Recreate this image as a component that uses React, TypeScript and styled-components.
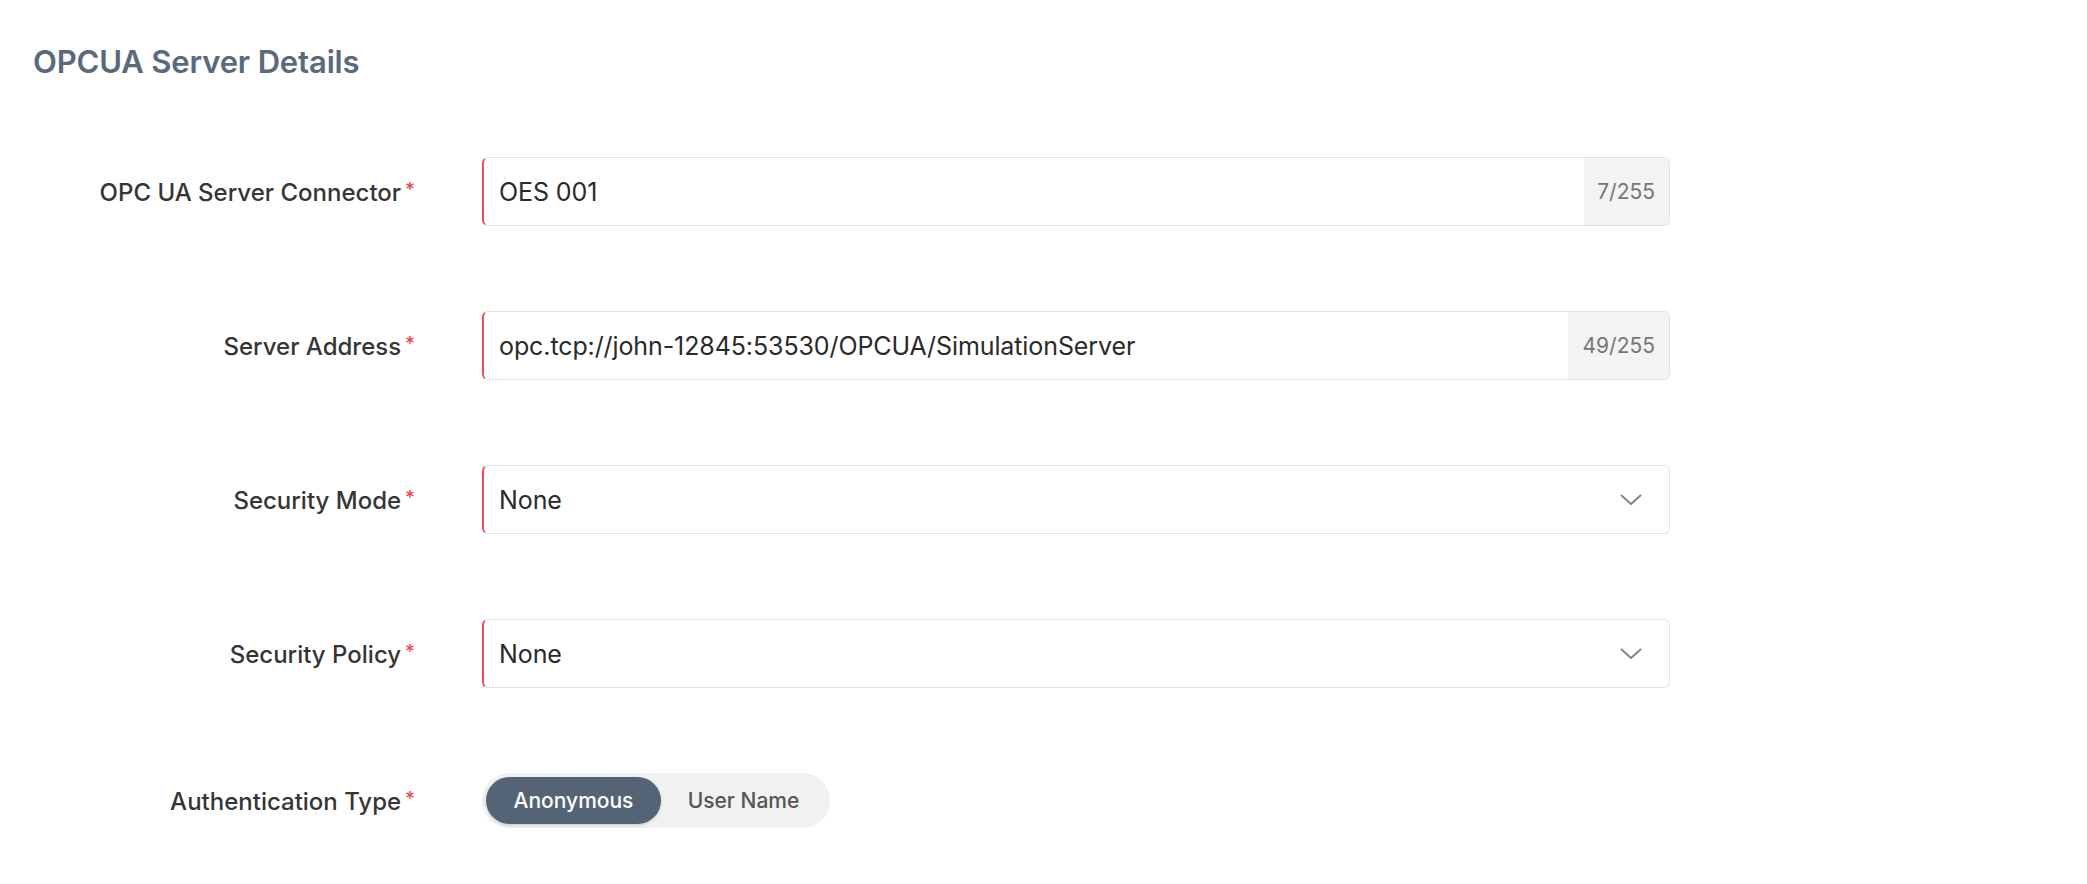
import React, { useState } from "react";
import styled, { createGlobalStyle } from "styled-components";

const GlobalStyle = createGlobalStyle`
  html, body { margin: 0; padding: 0; background: #ffffff; }
  body { font-family: Inter, "Noto Sans", "Liberation Sans", sans-serif; -webkit-font-smoothing: antialiased; }
  * { box-sizing: border-box; }
`;

const Page = styled.div`
  padding: 43px 0 40px 33px;
`;

const Title = styled.h1`
  margin: 0 0 77px 0;
  font-size: 31px;
  line-height: 37px;
  font-weight: 600;
  color: #5a6a7c;
  letter-spacing: -0.15px;
`;

const Form = styled.div`
  display: grid;
  grid-template-columns: 382px 1188px;
  column-gap: 67px;
  row-gap: 85px;
  align-items: center;
`;

const Label = styled.label`
  justify-self: end;
  font-size: 24px;
  font-weight: 500;
  color: #353535;
  white-space: nowrap;
  letter-spacing: 0;
  padding-top: 2px;
`;

const Required = styled.span`
  color: #ec4650;
  margin-left: 4px;
  font-size: 19px;
  vertical-align: 5px;
`;

const Field = styled.div`
  display: flex;
  align-items: stretch;
  height: 69px;
  border: 1px solid #e2e2e2;
  border-left: 2px solid #ef4d57;
  border-radius: 6px;
  background: #ffffff;
  overflow: hidden;
`;

const Value = styled.div`
  flex: 1;
  display: flex;
  align-items: center;
  padding-left: 15px;
  font-size: 25px;
  color: #2a2a2a;
  white-space: nowrap;
  letter-spacing: -0.1px;
`;

const Counter = styled.div<{ $w: number }>`
  width: ${(p) => p.$w}px;
  display: flex;
  align-items: center;
  justify-content: flex-end;
  padding-right: 14px;
  background: #f3f3f3;
  font-size: 21px;
  color: #767676;
`;

const Chevron = styled.div`
  display: flex;
  align-items: center;
  padding-right: 27px;
`;

const Toggle = styled.div`
  justify-self: start;
  display: flex;
  align-items: center;
  height: 55px;
  padding: 4px;
  border-radius: 28px;
  background: #f1f1f1;
`;

const Segment = styled.button<{ $active?: boolean; $w: number }>`
  width: ${(p) => p.$w}px;
  height: 47px;
  border: none;
  border-radius: 24px;
  font-family: inherit;
  font-size: 21px;
  font-weight: 500;
  cursor: pointer;
  background: ${(p) => (p.$active ? "#546476" : "transparent")};
  color: ${(p) => (p.$active ? "#ffffff" : "#555555")};
  box-shadow: ${(p) => (p.$active ? "0 1px 3px rgba(0,0,0,0.18)" : "none")};
`;

const ChevronIcon = () => (
  <svg width="22" height="12" viewBox="0 0 22 12" fill="none">
    <path d="M1.5 1.5 L11 10 L20.5 1.5" stroke="#7b8796" strokeWidth="2" strokeLinecap="round" strokeLinejoin="round" />
  </svg>
);

export default function App() {
  const [auth, setAuth] = useState("anon");
  return (
    <Page>
      <GlobalStyle />
      <Title>OPCUA Server Details</Title>
      <Form>
        <Label>
          OPC UA Server Connector<Required>*</Required>
        </Label>
        <Field>
          <Value>OES 001</Value>
          <Counter $w={85}>7/255</Counter>
        </Field>

        <Label>
          Server Address<Required>*</Required>
        </Label>
        <Field>
          <Value>opc.tcp://john-12845:53530/OPCUA/SimulationServer</Value>
          <Counter $w={101}>49/255</Counter>
        </Field>

        <Label>
          Security Mode<Required>*</Required>
        </Label>
        <Field>
          <Value>None</Value>
          <Chevron>
            <ChevronIcon />
          </Chevron>
        </Field>

        <Label>
          Security Policy<Required>*</Required>
        </Label>
        <Field>
          <Value>None</Value>
          <Chevron>
            <ChevronIcon />
          </Chevron>
        </Field>

        <Label>
          Authentication Type<Required>*</Required>
        </Label>
        <Toggle>
          <Segment $w={175} $active={auth === "anon"} onClick={() => setAuth("anon")}>
            Anonymous
          </Segment>
          <Segment $w={165} $active={auth === "user"} onClick={() => setAuth("user")}>
            User Name
          </Segment>
        </Toggle>
      </Form>
    </Page>
  );
}
